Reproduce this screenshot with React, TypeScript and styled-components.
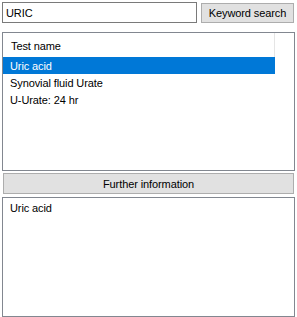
import styled, { createGlobalStyle } from "styled-components";

const GlobalStyle = createGlobalStyle`
  html, body {
    margin: 0;
    padding: 0;
    background: #ffffff;
  }
  body {
    font-family: "Liberation Sans", Arial, sans-serif;
    font-size: 11px;
    letter-spacing: -0.1px;
    color: #000000;
  }
`;

const Form = styled.div`
  width: 297px;
  height: 317px;
  padding: 2px 0 0 2px;
  box-sizing: border-box;
  display: flex;
  flex-direction: column;
  background: #ffffff;
`;

const SearchRow = styled.div`
  display: flex;
  align-items: flex-start;
  gap: 4px;
`;

const SearchBox = styled.input`
  width: 195px;
  height: 21px;
  box-sizing: border-box;
  border: 1px solid #7a7a7a;
  padding: 0 3px;
  margin: 0;
  font: inherit;
  letter-spacing: inherit;
  color: #000;
  outline: none;
  background: #fff;
`;

const Button = styled.button<{ $wide?: boolean }>`
  box-sizing: border-box;
  border: 1px solid #adadad;
  background: #e1e1e1;
  color: #000;
  font: inherit;
  letter-spacing: inherit;
  padding: 0;
  margin: ${({ $wide }) => ($wide ? "2px 0 0 1px" : "1px 0 0 0")};
  width: ${({ $wide }) => ($wide ? "291px" : "93px")};
  height: ${({ $wide }) => ($wide ? "21px" : "20px")};
  display: flex;
  align-items: center;
  justify-content: center;
`;

const Panel = styled.div<{ $top: number; $height: number }>`
  width: 293px;
  height: ${({ $height }) => $height}px;
  margin-top: ${({ $top }) => $top}px;
  box-sizing: border-box;
  border: 1px solid #828790;
  background: #fff;
  display: flex;
  flex-direction: column;
`;

const Header = styled.div`
  height: 24px;
  display: flex;
`;

const HeaderCell = styled.div`
  width: 272px;
  padding: 2px 0 0 8px;
  box-sizing: border-box;
  border-right: 1px solid #e5e5e5;
  display: flex;
  align-items: center;
`;

const Row = styled.div<{ $selected?: boolean }>`
  width: 272px;
  height: 17px;
  box-sizing: border-box;
  padding-left: 7px;
  display: flex;
  align-items: center;
  background: ${({ $selected }) => ($selected ? "#0078d7" : "transparent")};
  color: ${({ $selected }) => ($selected ? "#ffffff" : "#000000")};
`;

const DetailText = styled.div`
  padding: 4px 0 0 7px;
`;

const tests = ["Uric acid", "Synovial fluid Urate", "U-Urate: 24 hr"];

export default function App() {
  return (
    <>
      <GlobalStyle />
      <Form>
        <SearchRow>
          <SearchBox defaultValue="URIC" />
          <Button>Keyword search</Button>
        </SearchRow>
        <Panel $top={9} $height={139}>
          <Header>
            <HeaderCell>Test name</HeaderCell>
          </Header>
          {tests.map((t, i) => (
            <Row key={t} $selected={i === 0}>
              {t}
            </Row>
          ))}
        </Panel>
        <Button $wide>Further information</Button>
        <Panel $top={3} $height={120}>
          <DetailText>Uric acid</DetailText>
        </Panel>
      </Form>
    </>
  );
}
